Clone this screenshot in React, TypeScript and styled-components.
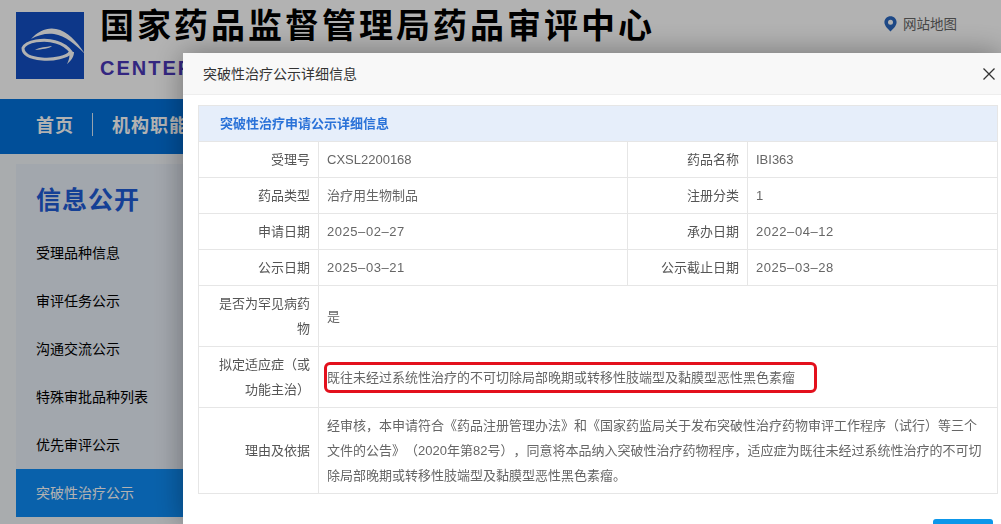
import React from "react";
import styled, { createGlobalStyle } from "styled-components";

const CJK = `"Liberation Sans", "Noto Sans CJK SC", sans-serif`;

const Global = createGlobalStyle`
  html, body { margin: 0; padding: 0; background: #fff; width: 1001px; height: 524px; overflow: hidden; }
  body { font-family: ${CJK}; text-spacing-trim: space-all; }
  * { box-sizing: border-box; }
`;

const Page = styled.div`
  width: 1001px;
  height: 524px;
  overflow: hidden;
  background: #f3f6fa;
`;

const Masthead = styled.header`
  height: 99px;
  display: flex;
  padding: 12px 0 0 16px;
  background: #fff;
`;

const Logo = styled.svg`
  width: 68px;
  height: 67px;
  flex: none;
`;

const Brand = styled.div`
  margin-left: 16px;
  flex: 1;
`;

const BrandTitle = styled.div`
  margin-top: -3px;
  font-size: 34px;
  line-height: 34px;
  font-weight: 700;
  letter-spacing: 3px;
  color: #000;
`;

const BrandSub = styled.div`
  margin-top: 14px;
  font-size: 20px;
  line-height: 22px;
  font-weight: 700;
  letter-spacing: 2px;
  color: #4a37b8;
`;

const SiteMap = styled.div`
  display: flex;
  align-items: center;
  gap: 6px;
  margin: 2px 44px 0 0;
  height: 18px;
  font-size: 13.5px;
  color: #666;
`;

const MarkerSvg = styled.svg`
  width: 13px;
  height: 16px;
  margin-top: 2px;
`;

const Nav = styled.nav`
  height: 55px;
  display: flex;
  align-items: center;
  padding: 0 0 5px 36px;
  background: #0272dc;
`;

const NavItem = styled.div`
  font-size: 18px;
  font-weight: 700;
  letter-spacing: 1px;
  color: #fff;
  white-space: nowrap;
`;

const NavDivider = styled.div`
  width: 1px;
  height: 23px;
  margin: 0 19px 0 18px;
  background: rgba(255, 255, 255, 0.85);
`;

const Sidebar = styled.aside`
  width: 240px;
  margin: 10px 0 0 16px;
  background: #e9eff8;
`;

const SideTitle = styled.h2`
  margin: 0;
  height: 65px;
  padding: 18px 0 0 20px;
  font-size: 25px;
  line-height: 36px;
  font-weight: 700;
  letter-spacing: 1px;
  color: #1f5cd6;
`;

const SideItem = styled.div<{ $active?: boolean }>`
  height: 48px;
  padding: 0 0 2px 20px;
  display: flex;
  align-items: center;
  font-size: 14px;
  color: ${(p) => (p.$active ? "#fff" : "#000")};
  background: ${(p) => (p.$active ? "#0e8cf5" : "transparent")};
`;

const Overlay = styled.div`
  position: fixed;
  inset: 0;
  background: rgba(0, 0, 0, 0.3);
`;

const Modal = styled.div`
  position: fixed;
  left: 183px;
  top: 53px;
  width: 818px;
  height: 471px;
  background: #fff;
  box-shadow: 0 0 28px rgba(0, 0, 0, 0.36);
  overflow: hidden;
`;

const ModalHead = styled.div`
  height: 42px;
  padding: 0 5px 2px 20px;
  display: flex;
  align-items: center;
  justify-content: space-between;
  background: #f8f8f8;
  border-bottom: 1px solid #eee;
  font-size: 14px;
  color: #333;
`;

const CloseButton = styled.svg`
  width: 14px;
  height: 14px;
  margin-top: 3px;
`;

const ModalBody = styled.div`
  padding: 10px 3px 0 15px;
`;

const Table = styled.table`
  width: 800px;
  table-layout: fixed;
  border-collapse: collapse;
  font-size: 13px;
  color: #555;
`;

const TitleCell = styled.th`
  height: 36px;
  padding: 0 0 2px 21px;
  text-align: left;
  font-size: 13px;
  font-weight: 700;
  color: #2a72d8;
  background: #e6eefa;
  border: 1px solid #e6e6e6;
`;

const Row = styled.tr<{ $h: number }>`
  height: ${(p) => p.$h}px;
`;

const Label = styled.td`
  padding: 5px 8px;
  text-align: right;
  line-height: 25px;
  color: #555;
  border: 1px solid #e6e6e6;
`;

const Value = styled.td`
  padding: 5px 8px;
  line-height: 25px;
  color: #666;
  border: 1px solid #e6e6e6;
`;

const DateText = styled.span`
  letter-spacing: 0.55px;
`;

const Highlighted = styled.span`
  position: relative;
  display: inline-block;
`;

const RedBox = styled.span`
  position: absolute;
  left: -3px;
  top: -3px;
  width: 493px;
  height: 31px;
  border: 3px solid #e3101c;
  border-radius: 6px;
`;

const Confirm = styled.div`
  position: absolute;
  right: 8px;
  top: 466px;
  width: 60px;
  height: 30px;
  border-radius: 3px;
  background: #0c97ea;
`;

const MarkerIcon = () => (
  <MarkerSvg viewBox="0 0 13 16">
    <path
      d="M6.5 0.3C3 0.3.4 3 .4 6.3c0 4 4.4 7.4 6.1 9.3 1.7-1.9 6.1-5.3 6.1-9.3C12.6 3 10 .3 6.5.3z"
      fill="#2a68c0"
    />
    <circle cx="6.5" cy="6.3" r="2.5" fill="#fff" />
  </MarkerSvg>
);

const CloseIcon = () => (
  <CloseButton viewBox="0 0 14 14">
    <path d="M1.5 1.5L12.5 12.5M12.5 1.5L1.5 12.5" stroke="#333" strokeWidth="1.3" fill="none" />
  </CloseButton>
);

const sideItems = [
  "受理品种信息",
  "审评任务公示",
  "沟通交流公示",
  "特殊审批品种列表",
  "优先审评公示",
  "突破性治疗公示",
];

export default function App() {
  return (
    <>
      <Global />
      <Page>
        <Masthead>
          <Logo viewBox="0 0 68 67">
            <rect width="68" height="67" fill="#1450c4" />
            <path d="M15 27C22 19 32 15 40 17C52 19 62 31 69 42C60 33 50 24 38 22C30 21 22 23 15 27Z" fill="#fff" />
            <path d="M7 36C10 29 28 26 40 30C47 32 52 36 55 40C51 45 38 48 26 47C14 46 7 42 7 36Z" fill="none" stroke="#fff" strokeWidth="3" />
            <path d="M19 38C24 35 30 35 36 34C33 37 26 37 19 38Z" fill="#fff" />
            <path d="M52 40C54 43 54 46 51 52C56 48 58 44 58 40Z" fill="#fff" />
          </Logo>
          <Brand>
            <BrandTitle>国家药品监督管理局药品审评中心</BrandTitle>
            <BrandSub>CENTER FOR DRUG EVALUATION</BrandSub>
          </Brand>
          <SiteMap>
            <MarkerIcon />
            网站地图
          </SiteMap>
        </Masthead>
        <Nav>
          <NavItem>首页</NavItem>
          <NavDivider />
          <NavItem>机构职能</NavItem>
        </Nav>
        <Sidebar>
          <SideTitle>信息公开</SideTitle>
          {sideItems.map((t) => (
            <SideItem key={t} $active={t === "突破性治疗公示"}>
              {t}
            </SideItem>
          ))}
        </Sidebar>
      </Page>
      <Overlay />
      <Modal>
        <ModalHead>
          突破性治疗公示详细信息
          <CloseIcon />
        </ModalHead>
        <ModalBody>
          <Table>
            <colgroup>
              <col style={{ width: 120 }} />
              <col style={{ width: 309 }} />
              <col style={{ width: 120 }} />
              <col />
            </colgroup>
            <tbody>
              <tr>
                <TitleCell colSpan={4}>突破性治疗申请公示详细信息</TitleCell>
              </tr>
              <Row $h={36}>
                <Label>受理号</Label>
                <Value>CXSL2200168</Value>
                <Label>药品名称</Label>
                <Value>IBI363</Value>
              </Row>
              <Row $h={36}>
                <Label>药品类型</Label>
                <Value>治疗用生物制品</Value>
                <Label>注册分类</Label>
                <Value>1</Value>
              </Row>
              <Row $h={36}>
                <Label>申请日期</Label>
                <Value><DateText>2025–02–27</DateText></Value>
                <Label>承办日期</Label>
                <Value><DateText>2022–04–12</DateText></Value>
              </Row>
              <Row $h={36}>
                <Label>公示日期</Label>
                <Value><DateText>2025–03–21</DateText></Value>
                <Label>公示截止日期</Label>
                <Value><DateText>2025–03–28</DateText></Value>
              </Row>
              <Row $h={61}>
                <Label>是否为罕见病药物</Label>
                <Value colSpan={3}>是</Value>
              </Row>
              <Row $h={61}>
                <Label>拟定适应症（或功能主治）</Label>
                <Value colSpan={3}>
                  <Highlighted>
                    既往未经过系统性治疗的不可切除局部晚期或转移性肢端型及黏膜型恶性黑色素瘤
                    <RedBox />
                  </Highlighted>
                </Value>
              </Row>
              <Row $h={86}>
                <Label>理由及依据</Label>
                <Value colSpan={3}>
                  经审核，本申请符合《药品注册管理办法》和《国家药监局关于发布突破性治疗药物审评工作程序（试行）等三个文件的公告》（2020年第82号），同意将本品纳入突破性治疗药物程序，适应症为既往未经过系统性治疗的不可切除局部晚期或转移性肢端型及黏膜型恶性黑色素瘤。
                </Value>
              </Row>
            </tbody>
          </Table>
        </ModalBody>
        <Confirm />
      </Modal>
    </>
  );
}
